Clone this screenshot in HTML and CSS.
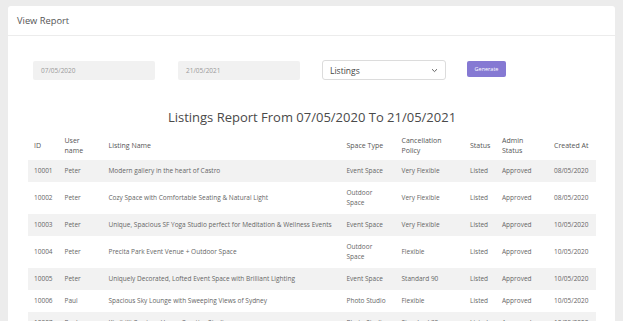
FILE: index.html
```html
<!DOCTYPE html>
<html lang="en">

<head>
  <meta charset="UTF-8" />
  <meta name="viewport" content="width=device-width, initial-scale=1.0" />
  <title>View Report</title>
  <link rel="stylesheet" href="styles.css">
</head>

<body>
  <div class="card">
    <div class="card-header">View Report</div>
    <div class="card-body">
      <div class="filters">
        <div class="date-input">07/05/2020</div>
        <div class="date-input">21/05/2021</div>
        <div class="select">
          <span>Listings</span>
          <svg width="7" height="5" viewBox="0 0 7 5"><path d="M1 1.2 L3.5 3.6 L6 1.2" fill="none" stroke="#555" stroke-width="0.9"/></svg>
        </div>
        <button class="btn">Generate</button>
      </div>

      <h2 class="report-title">Listings Report From 07/05/2020 To 21/05/2021</h2>

      <table class="report">
        <colgroup>
          <col class="c-id">
          <col class="c-user">
          <col class="c-name">
          <col class="c-type">
          <col class="c-policy">
          <col class="c-status">
          <col class="c-admin">
          <col class="c-date">
        </colgroup>
        <thead>
          <tr>
            <th>ID</th>
            <th>User name</th>
            <th>Listing Name</th>
            <th>Space Type</th>
            <th>Cancellation Policy</th>
            <th>Status</th>
            <th>Admin Status</th>
            <th>Created At</th>
          </tr>
        </thead>
        <tbody>
          <tr>
            <td>10001</td><td>Peter</td><td>Modern gallery in the heart of Castro</td>
            <td>Event Space</td><td>Very Flexible</td><td>Listed</td><td>Approved</td><td>08/05/2020</td>
          </tr>
          <tr>
            <td>10002</td><td>Peter</td><td>Cozy Space with Comfortable Seating &amp; Natural Light</td>
            <td>Outdoor Space</td><td>Very Flexible</td><td>Listed</td><td>Approved</td><td>08/05/2020</td>
          </tr>
          <tr>
            <td>10003</td><td>Peter</td><td>Unique, Spacious SF Yoga Studio perfect for Meditation &amp; Wellness Events</td>
            <td>Event Space</td><td>Very Flexible</td><td>Listed</td><td>Approved</td><td>10/05/2020</td>
          </tr>
          <tr>
            <td>10004</td><td>Peter</td><td>Precita Park Event Venue + Outdoor Space</td>
            <td>Outdoor Space</td><td>Flexible</td><td>Listed</td><td>Approved</td><td>10/05/2020</td>
          </tr>
          <tr>
            <td>10005</td><td>Peter</td><td>Uniquely Decorated, Lofted Event Space with Brilliant Lighting</td>
            <td>Event Space</td><td>Standard 90</td><td>Listed</td><td>Approved</td><td>10/05/2020</td>
          </tr>
          <tr>
            <td>10006</td><td>Paul</td><td>Spacious Sky Lounge with Sweeping Views of Sydney</td>
            <td>Photo Studio</td><td>Flexible</td><td>Listed</td><td>Approved</td><td>10/05/2020</td>
          </tr>
          <tr>
            <td>10007</td><td>Paul</td><td>Kirribilli Carriage House Creative Studio</td>
            <td>Photo Studio</td><td>Standard 30</td><td>Listed</td><td>Approved</td><td>10/05/2020</td>
          </tr>
        </tbody>
      </table>
    </div>
  </div>
</body>

</html>
```

FILE: styles.css
```css
* {
  margin: 0;
  padding: 0;
  box-sizing: border-box;
}

html,
body {
  height: 100%;
  overflow: hidden;
}

body {
  background: #ececec;
  padding: 6px 8px 0;
  font-family: "Open Sans", "Noto Sans", sans-serif;
  color: #555;
}

.card {
  background: #fff;
  border-radius: 3px;
  min-height: 400px;
}

.card-header {
  height: 30px;
  line-height: 30px;
  padding-left: 9px;
  font-size: 9.3px;
  color: #555;
  border-bottom: 1px solid #ececec;
}

.card-body {
  padding: 25px 19px 0 20px;
}

/* filter row */
.filters {
  display: flex;
  align-items: flex-start;
  padding-left: 5px;
}

.date-input {
  width: 122px;
  height: 19px;
  line-height: 19px;
  margin-right: 23px;
  padding-left: 8px;
  background: #f1f1f1;
  border-radius: 2px;
  font-size: 6.5px;
  color: #9a9a9a;
}

.date-input + .date-input {
  margin-right: 22px;
}

.select {
  width: 124px;
  height: 20px;
  margin-top: -1px;
  margin-right: 21px;
  padding: 0 7px;
  display: flex;
  align-items: center;
  justify-content: space-between;
  border: 1px solid #dcdcdc;
  border-radius: 3px;
  font-size: 8.5px;
  color: #444;
}

.btn {
  width: 39px;
  height: 16px;
  margin-top: -0.5px;
  border: none;
  border-radius: 2px;
  background: #8579d3;
  color: #fff;
  font-family: inherit;
  font-size: 5.5px;
}

.report-title {
  margin-top: 28px;
  text-align: center;
  font-size: 13px;
  font-weight: normal;
  color: #4a4a4a;
  line-height: 18px;
}

/* table */
.report {
  width: 568px;
  margin-top: 5px;
  border-collapse: collapse;
  table-layout: fixed;
  font-size: 6.5px;
}

.c-id { width: 30.5px; }
.c-user { width: 44px; }
.c-name { width: 238px; }
.c-type { width: 55px; }
.c-policy { width: 68.5px; }
.c-status { width: 32px; }
.c-admin { width: 52px; }
.c-date { width: 48px; }

.report th,
.report td {
  padding: 6px 6px;
  line-height: 10px;
  text-align: left;
  vertical-align: middle;
  font-weight: normal;
}

.report th {
  padding: 5px 6px 4px;
  font-size: 7px;
  color: #555;
}

.report td {
  color: #666;
}

.report tbody tr:nth-child(odd) {
  background: #f2f2f2;
}
```
